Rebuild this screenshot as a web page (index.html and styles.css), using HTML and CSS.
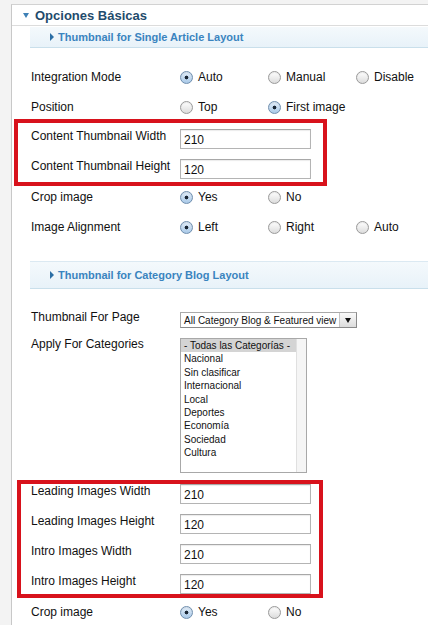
FILE: index.html
```html
<!DOCTYPE html>
<html lang="es">
<head>
<meta charset="utf-8">
<title>Opciones Básicas</title>
<link rel="stylesheet" href="styles.css">
</head>
<body>
<div class="page">
  <div class="panel">
    <div class="panel-title"><span class="tri-down"></span>Opciones Básicas</div>
    <div class="section">
      <div class="subhead"><span class="tri-right"></span>Thumbnail for Single Article Layout</div>
      <div class="rows rows-a">
        <div class="row">
          <div class="label">Integration Mode</div>
          <div class="opts">
            <div class="opt"><span class="radio checked"></span>Auto</div>
            <div class="opt"><span class="radio"></span>Manual</div>
            <div class="opt"><span class="radio"></span>Disable</div>
          </div>
        </div>
        <div class="row">
          <div class="label">Position</div>
          <div class="opts">
            <div class="opt"><span class="radio"></span>Top</div>
            <div class="opt"><span class="radio checked"></span>First image</div>
          </div>
        </div>
        <div class="group box-a">
          <div class="row field">
            <div class="label">Content Thumbnail Width</div>
            <input class="text" type="text" value="210">
          </div>
          <div class="row field">
            <div class="label">Content Thumbnail Height</div>
            <input class="text" type="text" value="120">
          </div>
        </div>
        <div class="row">
          <div class="label">Crop image</div>
          <div class="opts">
            <div class="opt"><span class="radio checked"></span>Yes</div>
            <div class="opt"><span class="radio"></span>No</div>
          </div>
        </div>
        <div class="row">
          <div class="label">Image Alignment</div>
          <div class="opts">
            <div class="opt"><span class="radio checked"></span>Left</div>
            <div class="opt"><span class="radio"></span>Right</div>
            <div class="opt"><span class="radio"></span>Auto</div>
          </div>
        </div>
      </div>

      <div class="subhead subhead-tall"><span class="tri-right"></span>Thumbnail for Category Blog Layout</div>
      <div class="rows rows-b">
        <div class="row field-select">
          <div class="label">Thumbnail For Page</div>
          <div class="select"><span class="select-text">All Category Blog &amp; Featured view</span><span class="select-btn"><span class="select-arrow"></span></span></div>
        </div>
        <div class="row field-list">
          <div class="label">Apply For Categories</div>
          <div class="listbox">
            <ul class="list">
              <li class="sel">- Todas las Categorías -</li>
              <li>Nacional</li>
              <li>Sin clasificar</li>
              <li>Internacional</li>
              <li>Local</li>
              <li>Deportes</li>
              <li>Economía</li>
              <li>Sociedad</li>
              <li>Cultura</li>
            </ul>
            <div class="scrolltrack"></div>
          </div>
        </div>
        <div class="group box-b">
          <div class="row field">
            <div class="label">Leading Images Width</div>
            <input class="text" type="text" value="210">
          </div>
          <div class="row field">
            <div class="label">Leading Images Height</div>
            <input class="text" type="text" value="120">
          </div>
          <div class="row field">
            <div class="label">Intro Images Width</div>
            <input class="text" type="text" value="210">
          </div>
          <div class="row field">
            <div class="label">Intro Images Height</div>
            <input class="text" type="text" value="120">
          </div>
        </div>
        <div class="row">
          <div class="label">Crop image</div>
          <div class="opts">
            <div class="opt"><span class="radio checked"></span>Yes</div>
            <div class="opt"><span class="radio"></span>No</div>
          </div>
        </div>
      </div>
    </div>
  </div>
</div>
</body>
</html>
```

FILE: styles.css
```css
html, body {
  margin: 0;
  padding: 0;
  background: #f3f3f3;
  font-family: "Liberation Sans", Arial, sans-serif;
  color: #111;
  overflow: hidden;
}

.page {
  padding: 4px 0 0 11px;
  height: 621px;
}

.panel {
  background: #fff;
  border-top: 1px solid #d2d2d2;
  border-left: 1px solid #c8c8c8;
  height: 100%;
}

.panel-title {
  height: 20px;
  display: flex;
  align-items: center;
  padding-left: 11px;
  border-bottom: 1px solid #dcdcdc;
  font-size: 13px;
  font-weight: bold;
  color: #1f4b6c;
}

.tri-down {
  width: 0;
  height: 0;
  border-left: 3.5px solid transparent;
  border-right: 3.5px solid transparent;
  border-top: 5px solid #3d80b6;
  margin-right: 6px;
}

.section {
  margin-left: 18px;
}

.subhead {
  margin-top: 1px;
  height: 20px;
  display: flex;
  align-items: center;
  padding-left: 20px;
  background: linear-gradient(#f4f9fc, #e8f2f9);
  border-bottom: 1px solid #c9dfeb;
  font-size: 11px;
  font-weight: bold;
  color: #3a84bf;
}

.subhead-tall {
  margin-top: 19px;
  height: 26px;
  border-top: 1px solid #dbe9f2;
}

.tri-right {
  width: 0;
  height: 0;
  border-top: 4px solid transparent;
  border-bottom: 4px solid transparent;
  border-left: 4px solid #2b6ea5;
  margin-right: 4px;
}

.rows-a {
  margin-top: 14px;
}

.rows-b {
  margin-top: 13px;
}

.row {
  height: 30px;
  display: flex;
  align-items: center;
  font-size: 12px;
}

.label {
  width: 149px;
  padding-left: 1px;
  flex: none;
}

.opts {
  display: grid;
  grid-template-columns: 88px 88px 88px;
}

.opt {
  display: flex;
  align-items: center;
  gap: 5px;
  font-size: 12px;
}

.radio {
  width: 11px;
  height: 11px;
  border-radius: 50%;
  border: 1px solid #9a9a9a;
  background: linear-gradient(#ffffff, #dcdcdc);
  box-shadow: inset 0 1px 1px rgba(0,0,0,0.08);
  flex: none;
}

.radio.checked {
  border-color: #6f8eae;
  background:
    radial-gradient(circle at 50% 50%, #1a2634 0, #1a2634 1.6px, transparent 2.2px),
    linear-gradient(#e3eef9, #a9c9e8);
}

.row.field {
  align-items: flex-start;
}

.row.field .label {
  line-height: 28px;
}

.text {
  margin: 7px 0 0 0;
  box-sizing: border-box;
  width: 131px;
  height: 20px;
  padding: 2px 0 0 3px;
  border: 1px solid #b4b4b4;
  border-top-color: #a8a8a8;
  box-shadow: inset 0 1px 1px rgba(0,0,0,0.08);
  font-family: "Liberation Sans", Arial, sans-serif;
  font-size: 12px;
  color: #111;
  background: #fff;
  outline: none;
}

.group {
  position: relative;
}

.group::after {
  content: "";
  position: absolute;
  border: 4px solid #d8121c;
  box-sizing: border-box;
  pointer-events: none;
}

.box-a::after {
  top: -3px;
  left: -16px;
  width: 313px;
  height: 67px;
}

.box-b::after {
  top: 3px;
  left: -13px;
  width: 306px;
  height: 118px;
}

.row.field-select {
  align-items: flex-start;
}

.row.field-select .label {
  line-height: 30px;
}

.select {
  margin-top: 10px;
  box-sizing: border-box;
  width: 177px;
  height: 16px;
  border: 1px solid #a9a9a9;
  border-right-color: #8a8a8a;
  border-bottom-color: #8a8a8a;
  display: flex;
  align-items: center;
  font-size: 10px;
  background: #fff;
}

.select-text {
  flex: 1;
  padding-left: 3px;
  white-space: nowrap;
}

.select-btn {
  width: 16px;
  height: 14px;
  border-left: 1px solid #c4c4c4;
  background: linear-gradient(#fafafa, #dcdcdc);
  display: flex;
  align-items: center;
  justify-content: center;
}

.select-arrow {
  width: 0;
  height: 0;
  border-left: 3px solid transparent;
  border-right: 3px solid transparent;
  border-top: 5px solid #111;
}

.row.field-list {
  height: 145px;
  align-items: flex-start;
}

.row.field-list .label {
  line-height: 24px;
}

.listbox {
  margin-top: 6px;
  box-sizing: border-box;
  width: 127px;
  height: 135px;
  border: 1px solid #a8a8a8;
  display: flex;
  background: #fff;
}

.list {
  list-style: none;
  margin: 0;
  padding: 0;
  flex: 1;
  font-size: 10px;
  line-height: 13.4px;
}

.list li {
  padding-left: 3px;
  white-space: nowrap;
}

.list li.sel {
  background: #d4d4d4;
}

.scrolltrack {
  width: 9px;
  border-left: 1px solid #e0e0e0;
  background: #f5f5f5;
}
```
